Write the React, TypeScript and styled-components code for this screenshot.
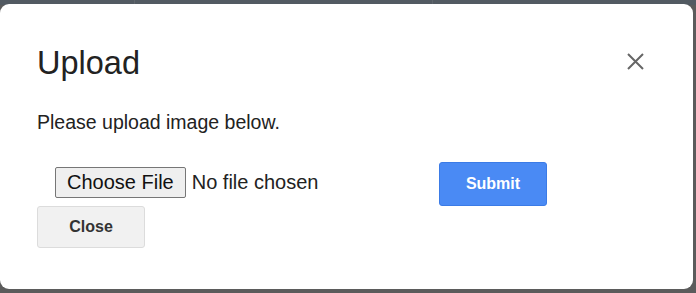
import React from 'react';
import styled, { createGlobalStyle } from 'styled-components';

const GlobalStyle = createGlobalStyle`
  html, body {
    margin: 0;
    padding: 0;
    width: 696px;
    height: 293px;
    overflow: hidden;
    background: #5b5b5b;
    font-family: "Liberation Sans", Arial, sans-serif;
  }
`;

const Page = styled.div`
  position: relative;
  width: 696px;
  height: 293px;
  overflow: hidden;
`;

const TableHead = styled.div`
  display: grid;
  grid-template-columns: 134px 298px 1fr;
  height: 30px;
  margin-top: -25px;
  background: #525a62;
`;

const HeadCell = styled.div<{ $divider?: boolean }>`
  display: flex;
  align-items: flex-end;
  justify-content: center;
  padding-bottom: 1px;
  border-left: ${(p) => (p.$divider ? '1px solid #5f666d' : 'none')};
  font-size: 17px;
  font-weight: 700;
  letter-spacing: 1px;
  color: #2b3035;
`;

const Modal = styled.div`
  position: absolute;
  left: 0;
  top: 4px;
  width: 693px;
  height: 285px;
  box-sizing: border-box;
  background: #fff;
  border-radius: 9px;
  padding: 40px 50px 0 37px;
  display: flex;
  flex-direction: column;
`;

const Header = styled.div`
  display: flex;
  align-items: center;
  justify-content: space-between;
`;

const Title = styled.h2`
  margin: 0;
  font-size: 32.5px;
  font-weight: 400;
  line-height: 38px;
  color: #222;
`;

const CloseIcon = styled.button`
  display: flex;
  padding: 0;
  margin: 0 -1px 4px 0;
  border: none;
  background: none;
  cursor: pointer;
`;

const Text = styled.p`
  margin: 28px 0 0;
  font-size: 19.5px;
  line-height: 24px;
  color: #222;
`;

const Row = styled.div`
  display: flex;
  align-items: flex-start;
  margin-top: 28px;
`;

const FileInput = styled.input`
  margin: 5px 0 0 18px;
  width: 384px;
  font-family: "Liberation Sans", Arial, sans-serif;
  font-size: 20px;
  color: #222;

  &::file-selector-button {
    font-family: "Liberation Sans", Arial, sans-serif;
    font-size: 20px;
    height: 31px;
    padding: 0 11px;
    margin-right: 6px;
    background: #efefef;
    border: 1px solid #767676;
    border-radius: 2px;
    color: #111;
  }
`;

const Button = styled.button<{ $primary?: boolean }>`
  width: 108px;
  height: ${(p) => (p.$primary ? '44px' : '42px')};
  font-family: "Liberation Sans", Arial, sans-serif;
  font-size: 16px;
  font-weight: 700;
  border-radius: 3px;
  cursor: pointer;
  color: ${(p) => (p.$primary ? '#fff' : '#333')};
  background: ${(p) => (p.$primary ? '#4a8af4' : '#f1f1f1')};
  border: 1px solid ${(p) => (p.$primary ? '#3b7be6' : '#dcdcdc')};
`;

export default function App() {
  return (
    <Page>
      <GlobalStyle />
      <TableHead>
        <HeadCell>IDS</HeadCell>
        <HeadCell $divider>PICTURES DONE</HeadCell>
        <HeadCell $divider>COMMENTS</HeadCell>
      </TableHead>
      <Modal>
        <Header>
          <Title>Upload</Title>
          <CloseIcon aria-label="close">
            <svg width="17" height="17" viewBox="0 0 17 17">
              <path d="M1 1 L16 16 M16 1 L1 16" stroke="#666" strokeWidth="2" />
            </svg>
          </CloseIcon>
        </Header>
        <Text>Please upload image below.</Text>
        <Row>
          <FileInput type="file" />
          <Button $primary>Submit</Button>
        </Row>
        <div>
          <Button>Close</Button>
        </div>
      </Modal>
    </Page>
  );
}
